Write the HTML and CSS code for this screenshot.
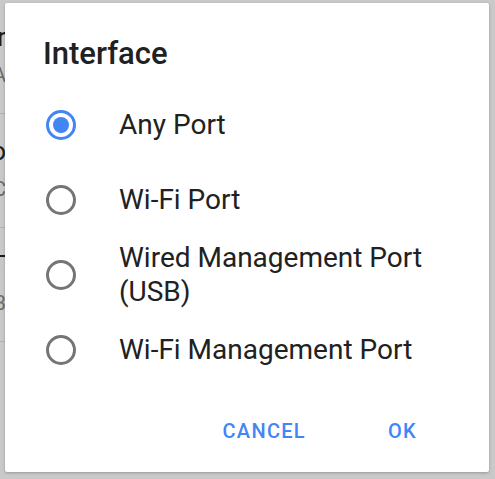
FILE: index.html
```html
<!DOCTYPE html>
<html lang="en">

<head>
    <meta charset="UTF-8">
    <meta name="viewport" content="width=device-width, initial-scale=1.0">
    <title>Interface</title>
    <link rel="stylesheet" href="styles.css">
</head>

<body>
    <!-- dimmed settings list behind the dialog -->
    <div class="list">
        <div class="listItem">
            <div class="primary">Router</div>
            <div class="secondary">A</div>
        </div>
        <div class="listItem">
            <div class="primary">Proto</div>
            <div class="secondary">C</div>
        </div>
        <div class="listItem">
            <div class="primary">T</div>
            <div class="secondary">3</div>
        </div>
        <div class="listItem"></div>
    </div>

    <div id="dialog">
        <h2 class="dialogTitle">Interface</h2>
        <div class="options">
            <label class="option">
                <span class="radio checked"></span>
                <span class="optionText">Any Port</span>
            </label>
            <label class="option">
                <span class="radio"></span>
                <span class="optionText">Wi-Fi Port</span>
            </label>
            <label class="option">
                <span class="radio"></span>
                <span class="optionText">Wired Management Port (USB)</span>
            </label>
            <label class="option">
                <span class="radio"></span>
                <span class="optionText">Wi-Fi Management Port</span>
            </label>
        </div>
        <div class="actions">
            <button class="cancelBtn">CANCEL</button>
            <button class="okBtn">OK</button>
        </div>
    </div>
</body>

</html>
```

FILE: styles.css
```css
body {
    font-family: 'Roboto', 'Noto Sans', sans-serif;
    margin: 0;
    padding: 0;
    height: 100vh;
    overflow: hidden;
    background-color: #c9c9c9;
    position: relative;
}

.list {
    display: flex;
    flex-direction: column;
}

.listItem {
    height: 114px;
    border-bottom: 1px solid #b4b4b4;
    display: flex;
    flex-direction: column;
    align-items: flex-end;
    width: 6px;
    box-sizing: border-box;
    white-space: nowrap;
}

.listItem:last-child {
    border-bottom: none;
}

.primary {
    font-size: 26px;
    color: #1c1c1c;
    margin-top: 20px;
    line-height: 34px;
}

.secondary {
    font-size: 20px;
    color: #6a6a6a;
    margin-top: 6px;
    line-height: 30px;
}

#dialog {
    position: absolute;
    left: 5px;
    top: 3px;
    width: 484px;
    height: 469px;
    background-color: #fff;
    border-radius: 2px;
    box-shadow: 0 1px 3px rgba(0, 0, 0, 0.25);
    box-sizing: border-box;
    padding: 31px 0 0 38px;
    display: flex;
    flex-direction: column;
}

.dialogTitle {
    margin: 0;
    font-size: 31px;
    font-weight: 500;
    line-height: 40px;
    color: #212121;
}

.options {
    display: flex;
    flex-direction: column;
    margin-top: 13px;
}

.option {
    display: flex;
    align-items: center;
    min-height: 75px;
}

.radio {
    width: 30px;
    height: 30px;
    box-sizing: border-box;
    border: 3px solid #757575;
    border-radius: 50%;
    margin-left: 3px;
    flex-shrink: 0;
    display: flex;
    justify-content: center;
    align-items: center;
}

.radio.checked {
    border-color: #4285f4;
}

.radio.checked::after {
    content: "";
    width: 16px;
    height: 16px;
    border-radius: 50%;
    background-color: #4285f4;
}

.optionText {
    margin-left: 43px;
    font-size: 28px;
    line-height: 34px;
    color: #212121;
    padding-right: 40px;
}

.actions {
    display: flex;
    justify-content: flex-end;
    margin-top: auto;
    margin-bottom: 20px;
    padding-right: 56px;
    gap: 50px;
}

button {
    font-family: 'Roboto', sans-serif;
    font-size: 20px;
    font-weight: 500;
    letter-spacing: 1.3px;
    color: #4285f4;
    background: none;
    border: none;
    padding: 8px 16px;
    margin: 0;
    cursor: pointer;
    line-height: 26px;
}
```
